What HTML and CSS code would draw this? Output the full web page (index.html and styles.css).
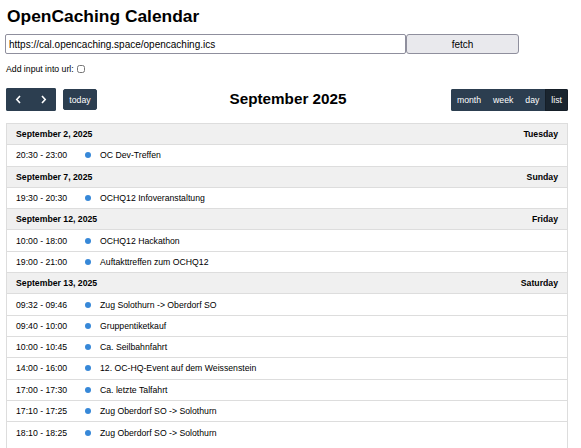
FILE: index.html
```html
<!DOCTYPE html>
<html lang="de">
<head>
<meta charset="utf-8">
<title>OpenCaching Calendar</title>
<link rel="stylesheet" href="styles.css">
</head>
<body>
<h1 class="title">OpenCaching Calendar</h1>
<div class="url-row">
  <input class="url-input" type="text" value="https://cal.opencaching.space/opencaching.ics">
  <button class="fetch-btn" type="button">fetch</button>
</div>
<label class="add-row">Add input into url: <input class="add-check" type="checkbox"></label>

<div class="toolbar">
  <div class="tb-left">
    <div class="btn-group">
      <button class="fc-btn icon-btn" type="button" aria-label="prev">
        <svg width="7" height="9" viewBox="0 0 7 9"><path d="M5 1 L1.8 4.5 L5 8" fill="none" stroke="#fff" stroke-width="1.6"/></svg>
      </button>
      <button class="fc-btn icon-btn" type="button" aria-label="next">
        <svg width="7" height="9" viewBox="0 0 7 9"><path d="M2 1 L5.2 4.5 L2 8" fill="none" stroke="#fff" stroke-width="1.6"/></svg>
      </button>
    </div>
    <button class="fc-btn today-btn" type="button">today</button>
  </div>
  <h2 class="month-title">September 2025</h2>
  <div class="tb-right">
    <div class="btn-group">
      <button class="fc-btn" type="button">month</button>
      <button class="fc-btn" type="button">week</button>
      <button class="fc-btn" type="button">day</button>
      <button class="fc-btn active" type="button">list</button>
    </div>
  </div>
</div>

<div class="list-wrap">
  <div class="day-row"><span>September 2, 2025</span><span>Tuesday</span></div>
  <div class="ev-row"><span class="ev-time">20:30 - 23:00</span><span class="dot"></span><span class="ev-title">OC Dev-Treffen</span></div>

  <div class="day-row"><span>September 7, 2025</span><span>Sunday</span></div>
  <div class="ev-row"><span class="ev-time">19:30 - 20:30</span><span class="dot"></span><span class="ev-title">OCHQ12 Infoveranstaltung</span></div>

  <div class="day-row"><span>September 12, 2025</span><span>Friday</span></div>
  <div class="ev-row"><span class="ev-time">10:00 - 18:00</span><span class="dot"></span><span class="ev-title">OCHQ12 Hackathon</span></div>
  <div class="ev-row"><span class="ev-time">19:00 - 21:00</span><span class="dot"></span><span class="ev-title">Auftakttreffen zum OCHQ12</span></div>

  <div class="day-row"><span>September 13, 2025</span><span>Saturday</span></div>
  <div class="ev-row"><span class="ev-time">09:32 - 09:46</span><span class="dot"></span><span class="ev-title">Zug Solothurn -&gt; Oberdorf SO</span></div>
  <div class="ev-row"><span class="ev-time">09:40 - 10:00</span><span class="dot"></span><span class="ev-title">Gruppentiketkauf</span></div>
  <div class="ev-row"><span class="ev-time">10:00 - 10:45</span><span class="dot"></span><span class="ev-title">Ca. Seilbahnfahrt</span></div>
  <div class="ev-row"><span class="ev-time">14:00 - 16:00</span><span class="dot"></span><span class="ev-title">12. OC-HQ-Event auf dem Weissenstein</span></div>
  <div class="ev-row"><span class="ev-time">17:00 - 17:30</span><span class="dot"></span><span class="ev-title">Ca. letzte Talfahrt</span></div>
  <div class="ev-row"><span class="ev-time">17:10 - 17:25</span><span class="dot"></span><span class="ev-title">Zug Oberdorf SO -&gt; Solothurn</span></div>
  <div class="ev-row last"><span class="ev-time">18:10 - 18:25</span><span class="dot"></span><span class="ev-title">Zug Oberdorf SO -&gt; Solothurn</span></div>
</div>
</body>
</html>
```
FILE: styles.css
```css
html, body {
  margin: 0;
  height: 100%;
  overflow: hidden;
}
body {
  box-sizing: border-box;
  padding: 0 13px 0 6px;
  display: flex;
  flex-direction: column;
  font-family: "Liberation Sans", Arial, sans-serif;
  font-size: 8.7px;
  color: #000;
  background: #fff;
}
.title {
  margin: 6px 0 0 1px;
  font-size: 17.4px;
  line-height: 20px;
  font-weight: bold;
}
.url-row {
  display: flex;
  margin: 8px 0 0 -1px;
  height: 20px;
}
.url-input {
  box-sizing: border-box;
  width: 401px;
  height: 20px;
  margin: 0;
  padding: 0 3px;
  font-family: "Liberation Sans", Arial, sans-serif;
  font-size: 10px;
  color: #000;
  border: 1px solid #8f8f9d;
  border-radius: 2px;
  background: #fff;
}
.fetch-btn {
  box-sizing: border-box;
  width: 113px;
  height: 20px;
  margin: 0;
  padding: 0;
  font-family: "Liberation Sans", Arial, sans-serif;
  font-size: 10px;
  color: #000;
  background: #e9e9ed;
  border: 1px solid #8f8f9d;
  border-radius: 3px;
}
.add-row {
  display: flex;
  align-items: center;
  margin-top: 10px;
  height: 10px;
  line-height: 10px;
}
.add-check {
  box-sizing: border-box;
  width: 8px;
  height: 8px;
  margin: 0 0 0 3px;
}
.toolbar {
  display: flex;
  align-items: center;
  justify-content: space-between;
  margin-top: 14px;
  height: 23px;
}
.tb-left, .tb-right {
  display: flex;
  align-items: center;
  width: 118px;
}
.tb-right {
  justify-content: flex-end;
}
.btn-group {
  display: flex;
  border-radius: 2px;
  overflow: hidden;
}
.fc-btn {
  box-sizing: border-box;
  height: 22px;
  margin: 0;
  padding: 0 5px;
  font-family: "Liberation Sans", Arial, sans-serif;
  font-size: 8.7px;
  color: #fff;
  background: #2c3e50;
  border: 1px solid #2c3e50;
  border-radius: 0;
}
.fc-btn.active {
  background: #1a252f;
  border-color: #151e27;
}
.icon-btn {
  width: 25px;
  height: 23px;
  display: flex;
  align-items: center;
  justify-content: center;
}
.today-btn {
  margin-left: 7px;
  width: 34px;
  height: 21px;
  padding: 0;
  border-radius: 2px;
}
.month-title {
  margin: -2px 0 0 2px;
  font-size: 15.25px;
  font-weight: bold;
  line-height: 20px;
}
.list-wrap {
  flex: 1;
  margin-top: 12px;
  border: 1px solid #ddd;
  border-bottom: none;
  overflow: hidden;
}
.day-row, .ev-row {
  box-sizing: border-box;
  display: flex;
  align-items: center;
  height: 21.3px;
  border-bottom: 1px solid #ddd;
  padding: 0 9px 0 9px;
}
.ev-row.last {
  border-bottom: none;
}
.day-row {
  justify-content: space-between;
  background: #f0f0f0;
  font-weight: bold;
}
.ev-time {
  width: 68px;
}
.dot {
  width: 6px;
  height: 6px;
  border-radius: 50%;
  background: #3788d8;
  margin-left: 1px;
}
.ev-title {
  margin-left: 9px;
}
```
